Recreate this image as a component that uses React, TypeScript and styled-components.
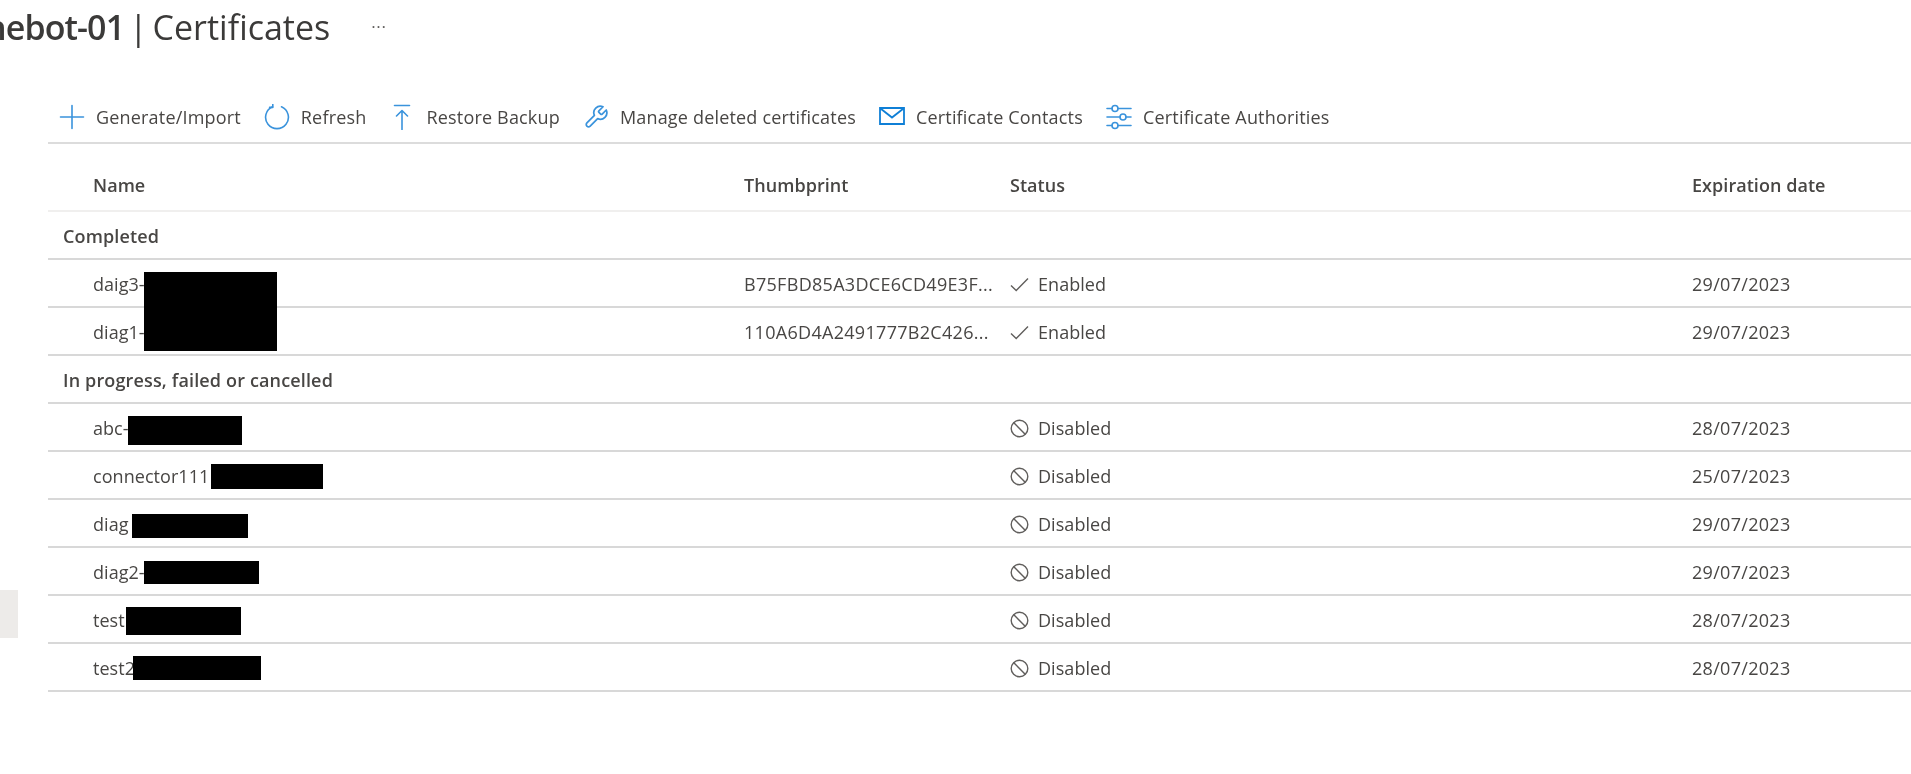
import React from "react";
import styled, { createGlobalStyle } from "styled-components";

const Global = createGlobalStyle`
  html, body { margin: 0; padding: 0; background: #fff; overflow: hidden; }
  body { font-family: "Open Sans", "Noto Sans", "Liberation Sans", sans-serif; color: #484644; }
`;

const Page = styled.div`
  display: flex;
  width: 1911px;
  height: 774px;
  overflow: hidden;
  filter: blur(0.35px);
`;

const Sidebar = styled.aside`
  flex: 0 0 48px;
  padding-top: 590px;
`;

const SidebarItem = styled.div`
  width: 18px;
  height: 48px;
  background: #edebe9;
`;

const Main = styled.main`
  flex: 1;
  min-width: 0;
  display: flex;
  flex-direction: column;
`;

const TitleRow = styled.header`
  display: flex;
  align-items: center;
  height: 54px;
  margin-left: -63px;
  white-space: nowrap;
`;

const Title = styled.h1`
  margin: 0;
  font-size: 34px;
  line-height: 54px;
  font-weight: 400;
  color: #3b3a39;
  letter-spacing: 0;
  word-spacing: -4px;
`;

const Resource = styled.strong`
  font-weight: 600;
  letter-spacing: -0.9px;
`;

const More = styled.span`
  margin-left: 41px;
  font-size: 17px;
  line-height: 54px;
  color: #605e5c;
  letter-spacing: 0.6px;
`;

const Toolbar = styled.nav`
  display: flex;
  align-items: center;
  height: 46px;
  margin-top: 40px;
  margin-bottom: 2px;
  padding-left: 11px;
  gap: 23px;
`;

const Divider = styled.div`
  height: 2px;
  background: #dcdcdc;
`;

const ToolButton = styled.div`
  display: flex;
  align-items: center;
  gap: 11px;
  font-size: 18px;
  letter-spacing: 0.18px;
  color: #484644;
  white-space: nowrap;
`;

const ToolIcon = styled.svg`
  flex: none;
  width: 26px;
  height: 26px;
  fill: none;
  stroke: #3a93dc;
  stroke-width: 1.6;
  stroke-linecap: round;
  stroke-linejoin: round;
`;

const MailIcon = styled(ToolIcon)`
  stroke: #0f7fd6;
  stroke-width: 1.8;
  stroke-linecap: butt;
  stroke-linejoin: miter;
`;

const Row = styled.div<{ $line?: string }>`
  position: relative;
  display: grid;
  grid-template-columns: 696px 266px 682px 1fr;
  align-items: center;
  height: 44px;
  padding-top: 2px;
  font-size: 18px;
  letter-spacing: 0.05px;
  border-bottom: 2px solid ${(p) => p.$line ?? "#d8d8d8"};
`;

const HeaderRow = styled(Row)`
  font-weight: 600;
  color: #484644;
  padding-top: 16px;
  height: 50px;
`;

const GroupRow = styled(Row)`
  display: flex;
  padding-left: 15px;
  font-weight: 600;
  letter-spacing: 0.15px;
  color: #484644;
`;

const NameCell = styled.div`
  padding-left: 45px;
  white-space: nowrap;
`;

const Cell = styled.div`
  white-space: nowrap;
`;

const NumberCell = styled(Cell)`
  letter-spacing: 0.3px;
`;

const StatusCell = styled.div`
  display: flex;
  align-items: center;
  gap: 9px;
`;

const StatusIcon = styled.svg`
  flex: none;
  width: 19px;
  height: 19px;
  fill: none;
  stroke: #605e5c;
  stroke-width: 1.4;
`;

const Redaction = styled.div<{ $left: number; $top: number; $width: number; $height: number }>`
  position: absolute;
  left: ${(p) => p.$left}px;
  top: ${(p) => p.$top}px;
  width: ${(p) => p.$width}px;
  height: ${(p) => p.$height}px;
  background: #000;
  z-index: 1;
`;

const Plus = () => (
  <ToolIcon viewBox="0 0 26 26">
    <path d="M13 1.5v23M1.5 13h23" />
  </ToolIcon>
);
const Refresh = () => (
  <ToolIcon viewBox="0 0 26 26">
    <path d="M17.5 2.8a11.4 11.4 0 1 1-9 0" />
    <path d="M8.8 0.4v3H5.6" />
  </ToolIcon>
);
const RestoreIcon = () => (
  <ToolIcon viewBox="0 0 26 26">
    <path d="M5.5 1.5h15M13 6.5v19M7.5 12 13 6.5 18.5 12" />
  </ToolIcon>
);
const Wrench = () => (
  <ToolIcon viewBox="0 0 24 24">
    <path d="M14.7 6.3a1 1 0 0 0 0 1.4l1.6 1.6a1 1 0 0 0 1.4 0l3.77-3.77a6 6 0 0 1-7.94 7.94l-6.91 6.91a2.12 2.12 0 0 1-3-3l6.91-6.91a6 6 0 0 1 7.94-7.94l-3.76 3.76z" />
  </ToolIcon>
);
const Mail = () => (
  <MailIcon viewBox="0 0 26 26">
    <path d="M1 4h24v16H1zM1.5 4.5 13 13.5 24.5 4.5" />
  </MailIcon>
);
const Sliders = () => (
  <ToolIcon viewBox="0 0 26 26">
    <path d="M1 4.5h5M12 4.5h13M1 13h13M20 13h5M1 21.5h5M12 21.5h13" />
    <circle cx="9" cy="4.5" r="3" />
    <circle cx="17" cy="13" r="3" />
    <circle cx="9" cy="21.5" r="3" />
  </ToolIcon>
);

const Check = () => (
  <StatusIcon viewBox="0 0 19 19">
    <path d="M1 10.5 6.2 15.5 18 3.5" />
  </StatusIcon>
);
const Blocked = () => (
  <StatusIcon viewBox="0 0 19 19">
    <circle cx="9.5" cy="9.5" r="8.3" />
    <path d="M3.6 3.6 15.4 15.4" />
  </StatusIcon>
);

const tools = [
  { label: "Generate/Import", Icon: Plus },
  { label: "Refresh", Icon: Refresh },
  { label: "Restore Backup", Icon: RestoreIcon },
  { label: "Manage deleted certificates", Icon: Wrench },
  { label: "Certificate Contacts", Icon: Mail },
  { label: "Certificate Authorities", Icon: Sliders },
];

type Cert = {
  name: string;
  thumb?: string;
  enabled: boolean;
  date: string;
  box?: { left: number; top: number; width: number; height: number };
};

const completed: Cert[] = [
  { name: "daig3-", thumb: "B75FBD85A3DCE6CD49E3F...", enabled: true, date: "29/07/2023", box: { left: 96, top: 12, width: 133, height: 79 } },
  { name: "diag1-", thumb: "110A6D4A2491777B2C426...", enabled: true, date: "29/07/2023" },
];

const pending: Cert[] = [
  { name: "abc-", enabled: false, date: "28/07/2023", box: { left: 80, top: 12, width: 114, height: 29 } },
  { name: "connector111", enabled: false, date: "25/07/2023", box: { left: 163, top: 12, width: 112, height: 25 } },
  { name: "diag", enabled: false, date: "29/07/2023", box: { left: 84, top: 14, width: 116, height: 24 } },
  { name: "diag2-", enabled: false, date: "29/07/2023", box: { left: 96, top: 13, width: 115, height: 23 } },
  { name: "test", enabled: false, date: "28/07/2023", box: { left: 78, top: 11, width: 115, height: 28 } },
  { name: "test2", enabled: false, date: "28/07/2023", box: { left: 85, top: 12, width: 128, height: 24 } },
];

const CertRow = ({ cert }: { cert: Cert }) => (
  <Row>
    <NameCell>{cert.name}</NameCell>
    <NumberCell>{cert.thumb}</NumberCell>
    <StatusCell>
      {cert.enabled ? <Check /> : <Blocked />}
      {cert.enabled ? "Enabled" : "Disabled"}
    </StatusCell>
    <NumberCell>{cert.date}</NumberCell>
    {cert.box && (
      <Redaction $left={cert.box.left} $top={cert.box.top} $width={cert.box.width} $height={cert.box.height} />
    )}
  </Row>
);

export default function App() {
  return (
    <>
      <Global />
      <Page>
        <Sidebar>
          <SidebarItem />
        </Sidebar>
        <Main>
          <TitleRow>
            <Title>
              <Resource>nebot-01</Resource> | Certificates
            </Title>
            <More>···</More>
          </TitleRow>
          <Toolbar>
            {tools.map(({ label, Icon }) => (
              <ToolButton key={label}>
                <Icon />
                {label}
              </ToolButton>
            ))}
          </Toolbar>
          <Divider />
          <HeaderRow $line="#f0efee">
            <NameCell>Name</NameCell>
            <Cell>Thumbprint</Cell>
            <Cell>Status</Cell>
            <Cell>Expiration date</Cell>
          </HeaderRow>
          <GroupRow>Completed</GroupRow>
          {completed.map((c) => (
            <CertRow key={c.name} cert={c} />
          ))}
          <GroupRow>In progress, failed or cancelled</GroupRow>
          {pending.map((c) => (
            <CertRow key={c.name} cert={c} />
          ))}
        </Main>
      </Page>
    </>
  );
}
